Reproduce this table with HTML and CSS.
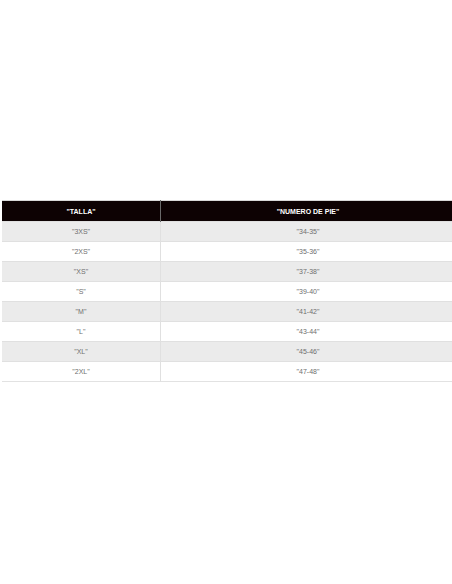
FILE: index.html
```html
<!DOCTYPE html>
<html>
<head>
<meta charset="utf-8">
<link rel="stylesheet" href="styles.css">
</head>
<body>
<div class="wrap">
<table class="sizes">
<thead>
<tr><th class="c1">"TALLA"</th><th class="c2">"NUMERO DE PIE"</th></tr>
</thead>
<tbody>
<tr><td>"3XS"</td><td>"34-35"</td></tr>
<tr><td>"2XS"</td><td>"35-36"</td></tr>
<tr><td>"XS"</td><td>"37-38"</td></tr>
<tr><td>"S"</td><td>"39-40"</td></tr>
<tr><td>"M"</td><td>"41-42"</td></tr>
<tr><td>"L"</td><td>"43-44"</td></tr>
<tr><td>"XL"</td><td>"45-46"</td></tr>
<tr><td>"2XL"</td><td>"47-48"</td></tr>
</tbody>
</table>
</div>
</body>
</html>
```
FILE: styles.css
```css
html, body {
  margin: 0;
  padding: 0;
  background: #fff;
}
body {
  font-family: "Liberation Sans", Arial, sans-serif;
  overflow: hidden;
}
.wrap {
  padding-top: 200px;
  padding-left: 2px;
}
.sizes {
  border-collapse: collapse;
  width: 453px;
  table-layout: fixed;
  border-top: 1px solid #d8d8d8;
  border-bottom: 1px solid #e2e2e2;
}
.sizes .c1 { width: 158px; }
.sizes th {
  background: #0d0203;
  color: #fff;
  font-size: 7px;
  font-weight: bold;
  height: 20px;
  padding: 0;
  text-align: center;
  border-right: 1px solid #6a6a6a;
}
.sizes th:last-child { border-right: none; }
.sizes td {
  height: 19px;
  padding: 0;
  text-align: center;
  font-size: 7px;
  color: #6f6f6f;
  border-top: 1px solid #e0e0e0;
  border-right: 1px solid #e0e0e0;
}
.sizes td:last-child { border-right: none; }
.sizes tbody tr:nth-child(odd) td { background: #ebebeb; }
.sizes tbody tr:nth-child(even) td { background: #fff; }
```
